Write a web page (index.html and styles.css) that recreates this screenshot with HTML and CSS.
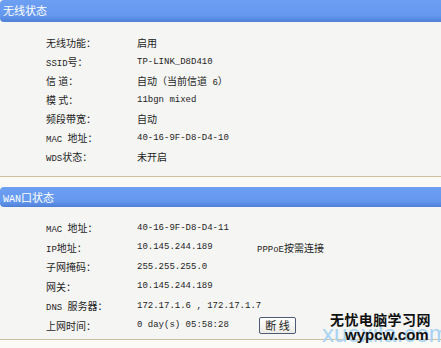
FILE: index.html
```html
<!DOCTYPE html>
<html>
<head>
<meta charset="UTF-8">
<title>运行状态</title>
<link rel="stylesheet" href="styles.css">
</head>
<body>
  <div class="page">
    <div class="panel">
      <div class="panel-title">无线状态</div>
      <div class="panel-body">
        <div class="row"><span>无线功能：</span><span>启用</span></div>
        <div class="row"><span><i class="en">SSID</i>号：</span><span class="en">TP-LINK_D8D410</span></div>
        <div class="row"><span>信 道：</span><span>自动（当前信道<i class="en"> 6</i>）</span></div>
        <div class="row"><span>模 式：</span><span class="en">11bgn mixed</span></div>
        <div class="row"><span>频段带宽：</span><span>自动</span></div>
        <div class="row"><span><i class="en">MAC </i>地址：</span><span class="en">40-16-9F-D8-D4-10</span></div>
        <div class="row"><span><i class="en">WDS</i>状态：</span><span>未开启</span></div>
      </div>
    </div>

    <div class="gap"></div>

    <div class="panel">
      <div class="panel-title"><i class="en">WAN</i>口状态</div>
      <div class="panel-body wan">
        <div class="row"><span><i class="en">MAC </i>地址：</span><span class="en">40-16-9F-D8-D4-11</span><span></span></div>
        <div class="row"><span><i class="en">IP</i>地址：</span><span class="en">10.145.244.189</span><span><i class="en">PPPoE</i>按需连接</span></div>
        <div class="row"><span>子网掩码：</span><span class="en">255.255.255.0</span><span></span></div>
        <div class="row"><span>网关：</span><span class="en">10.145.244.189</span><span></span></div>
        <div class="row"><span><i class="en">DNS </i>服务器：</span><span class="en">172.17.1.6 , 172.17.1.7</span><span></span></div>
        <div class="row"><span>上网时间：</span><span class="en">0 day(s) 05:58:28</span><span><button class="btn">断 线</button></span></div>
      </div>
    </div>
    <div class="bottom"></div>
  </div>

  <div class="watermark">
    <div class="wm-back">xuexila.com</div>
    <div class="wm-cn">无忧电脑学习网</div>
    <div class="wm-en">wypcw.com</div>
  </div>
</body>
</html>
```

FILE: styles.css
```css
:root {
  --title-blue: #6498ef;
  --title-edge: #4f7fd6;
  --panel-bg: #f5f5f4;
  --text-color: #1e1e1e;
  --rule: #cdbf9f;
}

body {
  margin: 0;
  width: 441px;
  height: 348px;
  overflow: hidden;
  background: #fbfaf6;
  font-family: "Noto Sans CJK SC", sans-serif;
  font-size: 10px;
  color: var(--text-color);
  position: relative;
}

i {
  font-style: normal;
}

.en {
  font-family: "Liberation Mono", monospace;
  font-size: 9px;
}

.panel-title {
  height: 22px;
  line-height: 21px;
  padding-left: 3px;
  background: linear-gradient(#6d9ff2, var(--title-blue) 70%, var(--title-edge));
  color: #fff;
  font-size: 11px;
  border-radius: 4px 0 0 4px;
}

.panel-title .en {
  font-size: 10px;
}

.panel-body {
  background: var(--panel-bg);
  padding: 11px 0 10px 46px;
  border-bottom: 1px solid var(--rule);
}

.row {
  display: grid;
  grid-template-columns: 91px 120px auto;
  height: 19px;
  align-items: center;
  white-space: nowrap;
}

.wan {
  padding-top: 11px;
  padding-bottom: 4px;
}

.wan .row {
  height: 19.5px;
}

.gap {
  height: 10px;
}

.panel + .gap + .panel .panel-title {
  height: 20px;
  line-height: 20px;
}

.btn {
  margin-left: 2px;
  width: 37px;
  height: 17px;
  padding: 0;
  font-family: "Noto Sans CJK SC", sans-serif;
  font-size: 11px;
  color: #222;
  background: linear-gradient(#ffffff, #ecebe4);
  border: 1px solid #4c5b73;
  border-radius: 2px;
  line-height: 14px;
}

.bottom {
  height: 8px;
}

/* 右下角水印 */
.watermark {
  position: absolute;
  left: 320px;
  top: 311px;
  width: 121px;
}

.wm-back {
  position: absolute;
  left: 2px;
  top: 9px;
  font-family: "Liberation Sans", sans-serif;
  font-size: 24px;
  color: #a9d3f2;
}

.wm-cn {
  position: relative;
  padding-left: 10px;
  font-size: 14px;
  font-weight: bold;
  line-height: 16px;
  letter-spacing: 0.4px;
  color: #111;
}

.wm-en {
  position: relative;
  padding-left: 25px;
  font-family: "Liberation Sans", sans-serif;
  font-size: 15px;
  font-weight: bold;
  line-height: 15px;
  color: #111;
}
```
